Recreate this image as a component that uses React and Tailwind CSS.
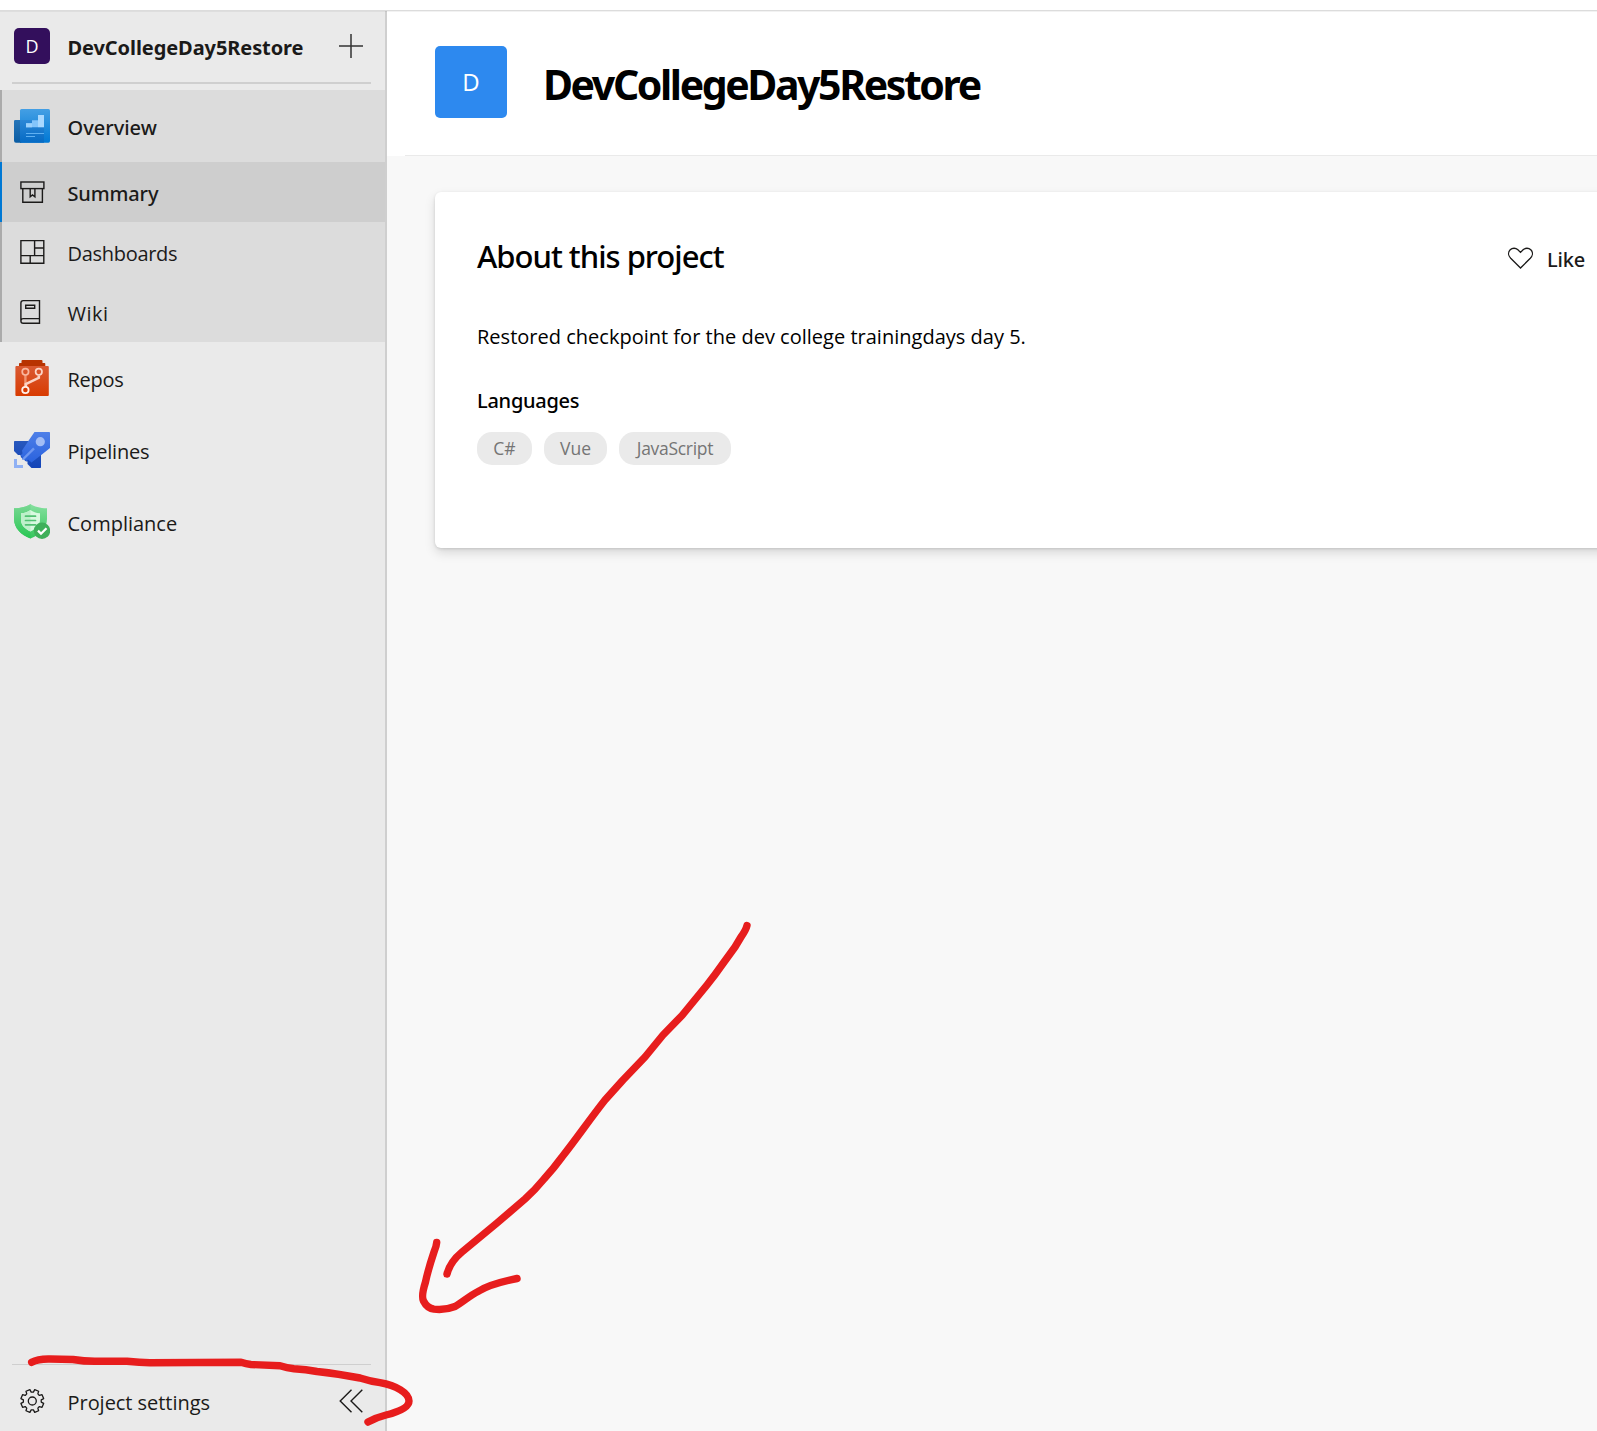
function OverviewIcon() {
  return (
    <svg width="36" height="36" viewBox="0 0 36 36" className="shrink-0">
      <defs>
        <linearGradient id="ovMain" x1="0" y1="0" x2="0" y2="1">
          <stop offset="0" stopColor="#449fe4" />
          <stop offset="1" stopColor="#0078d4" />
        </linearGradient>
        <linearGradient id="ovBack" x1="0" y1="0" x2="0" y2="1">
          <stop offset="0" stopColor="#2675b8" />
          <stop offset="1" stopColor="#0a5ca3" />
        </linearGradient>
        <linearGradient id="ovPage" x1="0" y1="0" x2="0" y2="1">
          <stop offset="0" stopColor="#2c87d6" />
          <stop offset="1" stopColor="#056ac4" />
        </linearGradient>
      </defs>
      <path d="M7.500 1H34.500Q36 1 36 2.500V33Q36 34.700 34.500 34.700H6V2.500Q6 1 7.500 1Z" fill="url(#ovMain)" />
      <path d="M6 12H30V34.700H6Z" fill="url(#ovPage)" />
      <path d="M1.200 12H6V32.500Q6 34.700 8 34.700H2Q0 34.700 0 32.500V13.200Q0 12 1.200 12Z" fill="url(#ovBack)" />
      <path d="M12 15.300H18V12.300H24V19.300H12Z" fill="#83c4fb" />
      <path d="M24 7H30V19.300H24Z" fill="#a9d8ff" />
      <path d="M12 15.300H18V19.300H12Z" fill="#9bd0fc" />
      <path d="M12 25.500H30M12 28.500H21" stroke="#5fb0f2" strokeWidth="1" />
    </svg>
  );
}

function ReposIcon() {
  return (
    <svg width="36" height="36" viewBox="0 0 36 36" className="shrink-0">
      <defs>
        <linearGradient id="repoBody" x1="0" y1="0" x2="0" y2="1">
          <stop offset="0" stopColor="#da5a33" />
          <stop offset="1" stopColor="#d83b01" />
        </linearGradient>
      </defs>
      <path d="M8.500 0H27.500Q28.500 0 28.500 1V3H30.500Q31.300 3 31.300 4V6.500H5V4Q5 3 5.800 3H7.500V1Q7.500 0 8.500 0Z" fill="#b83301" />
      <rect x="1.4" y="6" width="33.4" height="30" rx="1" fill="url(#repoBody)" />
      <path d="M11.400 15V26" stroke="#f0926f" strokeWidth="2.4" />
      <path d="M24.800 15.400V17.800L11.800 24V27" fill="none" stroke="#fbd3c4" strokeWidth="2.6" />
      <circle cx="11.4" cy="11.8" r="3.2" fill="none" stroke="#f9b69e" strokeWidth="1.7" />
      <circle cx="24.8" cy="11.8" r="3.2" fill="none" stroke="#fcd5c7" strokeWidth="1.7" />
      <circle cx="11.4" cy="30" r="3.2" fill="#d83b01" stroke="#fff0ea" strokeWidth="1.8" />
    </svg>
  );
}

function PipelinesIcon() {
  return (
    <svg width="36" height="36" viewBox="0 0 36 36" className="shrink-0">
      <defs>
        <linearGradient id="pipeTop" x1="0" y1="0" x2="0" y2="1">
          <stop offset="0" stopColor="#4f80e8" />
          <stop offset="1" stopColor="#2a62de" />
        </linearGradient>
        <linearGradient id="pipeLow" x1="0" y1="0" x2="0" y2="1">
          <stop offset="0" stopColor="#2858bd" />
          <stop offset="1" stopColor="#1344b8" />
        </linearGradient>
      </defs>
      <path d="M0 9.800Q0 9 .800 9H15L27 21V35.200Q27 36 26.200 36H17.500L13.500 32V29.500L11 29L10 26.500L7 25.500L6.500 23L4 23L0 19Z" fill="url(#pipeLow)" />
      <path d="M20.500 0H35.200Q36 0 36 .800V16L28.500 22L17.500 30.500L14 27.500L12.500 29.500L10.500 27.500L8 27.500L8.500 25L6.500 23.500L8.500 21.500L8 18.500L15 8Z" fill="url(#pipeTop)" />
      <path d="M9.300 27L20 16.300" stroke="#6f97f0" strokeWidth="2.4" />
      <circle cx="26.3" cy="9.7" r="4.6" fill="#a3bdf5" />
      <path d="M0 27H3V33H9V36H0Z" fill="#8fb0f4" />
    </svg>
  );
}

function ComplianceIcon() {
  return (
    <svg width="36" height="36" viewBox="0 0 36 36" className="shrink-0">
      <defs>
        <linearGradient id="shOuter" x1="0" y1="0" x2="0" y2="1">
          <stop offset="0" stopColor="#86e09f" />
          <stop offset="1" stopColor="#35c65c" />
        </linearGradient>
        <linearGradient id="shHalf" x1="0" y1="0" x2="0" y2="1">
          <stop offset="0" stopColor="#7ad894" />
          <stop offset="1" stopColor="#28c653" />
        </linearGradient>
      </defs>
      <path d="M16.500 0C20 2.600 26 4.300 33 4.300V15C33 24 26 31 16.500 34.600C7 31 0 24 0 15V4.300C7 4.300 13 2.600 16.500 0Z" fill="url(#shOuter)" />
      <path d="M16.500 0C13 2.600 7 4.300 0 4.300V15C0 24 7 31 16.500 34.600Z" fill="url(#shHalf)" />
      <path d="M16.500 6C19 7.900 22 9 26 9.200V16C26 21 22 25 16.500 27.500C11 25 7 21 7 16V9.200C11 9 14 7.900 16.500 6Z" fill="#d9f9e1" />
      <path d="M16.500 6C14 7.900 11 9 7 9.200V16C7 21 11 25 16.500 27.500Z" fill="#bdf0ca" />
      <path d="M11.500 12.200H21.500M11.500 16.500H21.500M11.500 20.800H21.500" stroke="#52c173" strokeWidth="1.7" strokeLinecap="round" />
      <circle cx="28" cy="26.8" r="8.2" fill="#3fb05a" />
      <path d="M24 26.600L27 29.700L32.500 24.200" fill="none" stroke="#fff" strokeWidth="2.3" />
    </svg>
  );
}

function SummaryIcon() {
  return (
    <svg width="36" height="36" viewBox="0 0 36 36" fill="none" stroke="#1b1a19" strokeWidth="1.4" className="shrink-0">
      <rect x="6.9" y="8" width="23" height="6.6" />
      <path d="M8.800 14.600V28.200H28.400V14.600M16.200 14.600V22.800L18.500 21L20.900 22.800V14.600" />
    </svg>
  );
}

function DashboardsIcon() {
  return (
    <svg width="36" height="36" viewBox="0 0 36 36" fill="none" stroke="#1b1a19" strokeWidth="1.4" className="shrink-0">
      <path d="M6.900 6.600H29.800V29.300H6.900ZM20.600 6.600V21.600M20.600 14H29.800M6.900 21.600H29.800M16.200 21.600V29.300" />
    </svg>
  );
}

function WikiIcon() {
  return (
    <svg width="36" height="36" viewBox="0 0 36 36" fill="none" stroke="#1b1a19" strokeWidth="1.4" className="shrink-0">
      <path d="M9.200 6.600H25.500V29.300H9.200Q6.900 29.300 6.900 27V9Q6.900 6.600 9.200 6.600ZM7.100 26.400Q7.200 24.600 9.200 24.600H25.500M11.700 11.200H20.700V14.200H11.700Z" />
    </svg>
  );
}

function GearIcon() {
  const pts = [];
  for (let i = 0; i < 8; i++) {
    const mid = -67.5 + i * 45;
    [[-15.5, 9], [-10.5, 11.6], [10.5, 11.6], [15.5, 9]].forEach(([da, r]) => {
      const a = ((mid + da) * Math.PI) / 180;
      pts.push(`${(18.3 + r * Math.cos(a)).toFixed(2)} ${(18 + r * Math.sin(a)).toFixed(2)}`);
    });
  }
  return (
    <svg width="36" height="36" viewBox="0 0 36 36" fill="none" stroke="#1b1a19" strokeWidth="1.3" strokeLinejoin="round" className="shrink-0">
      <path d={`M${pts.join("L")}Z`} />
      <circle cx="18.3" cy="18" r="4" />
    </svg>
  );
}

const SERVICES = [
  { label: "Repos", Icon: ReposIcon, track: "tracking-[-0.25px]" },
  { label: "Pipelines", Icon: PipelinesIcon, track: "tracking-[-0.2px]" },
  { label: "Compliance", Icon: ComplianceIcon, track: "tracking-normal" },
];

const PAGES = [
  { label: "Summary", Icon: SummaryIcon, track: "font-['Noto_Sans'] font-medium tracking-[-0.15px]", active: true },
  { label: "Dashboards", Icon: DashboardsIcon, track: "tracking-[-0.3px]" },
  { label: "Wiki", Icon: WikiIcon, track: "tracking-[0.5px]" },
];

function Sidebar() {
  return (
    <aside className="flex w-[387px] shrink-0 flex-col border-r-2 border-[#cfcfcf] bg-[#eaeaea] text-[20px] text-[#1b1a19]">
      <div className="mx-3 mr-[14px] flex h-[74px] items-center border-b-2 border-[#cfcfcf] pl-[2px]">
        <div className="flex size-9 items-center justify-center rounded-[5px] bg-[#330f5c] text-[18px] text-white">D</div>
        <span className="ml-[17.5px] pt-[4px] font-['Noto_Sans'] font-bold tracking-[-0.08px]">DevCollegeDay5Restore</span>
        <svg width="24" height="24" viewBox="0 0 24 24" className="ml-auto mr-[8.5px]" stroke="#333" strokeWidth="1.5">
          <path d="M0 12H24M12 0V24" />
        </svg>
      </div>
      <div className="mt-[6px] bg-[#dcdcdc]">
        <div className="flex h-[72px] items-center border-l-2 border-[#ababab] pl-3">
          <OverviewIcon />
          <span className="ml-[17.5px] pt-[4px] font-['Noto_Sans'] font-medium">Overview</span>
        </div>
        {PAGES.map(({ label, Icon, track, active }) => (
          <div key={label} className={`flex h-[60px] items-center border-l-2 pl-3 ${active ? "border-[#0078d4] bg-[#cecece]" : "border-[#ababab]"}`}>
            <Icon />
            <span className={`ml-[17.5px] pt-[4px] ${track}`}>{label}</span>
          </div>
        ))}
      </div>
      {SERVICES.map(({ label, Icon, track }) => (
        <div key={label} className="flex h-[72px] items-center pl-[14px]">
          <Icon />
          <span className={`ml-[17.5px] pt-[4px] ${track}`}>{label}</span>
        </div>
      ))}
      <div className="mx-3 mr-[14px] mt-auto flex h-[67px] items-center border-t border-[#cfcfcf] pl-[2px] pt-[6px]">
        <GearIcon />
        <span className="ml-[17.5px] pt-[4px] tracking-[-0.04px]">Project settings</span>
        <svg width="24" height="24" viewBox="0 0 24 24" className="ml-auto mr-[8.5px]" fill="none" stroke="#1b1a19" strokeWidth="1.4">
          <path d="M12.500 .700L1.200 12L12.500 23.300M23.300 .700L12 12L23.300 23.300" />
        </svg>
      </div>
    </aside>
  );
}

function Main() {
  return (
    <main className="flex min-w-0 grow flex-col overflow-hidden bg-[#f8f8f8] text-black">
      <header className="flex h-[146px] shrink-0 bg-white pl-[18px] pt-px">
        <div className="flex grow border-b border-[#eaeaea] pl-[30px] pt-[35px]">
          <div className="flex size-[72px] items-center justify-center rounded-[5px] bg-[#2d89ef] text-[24px] text-white">D</div>
          <h1 className="ml-[36px] pt-[10px] font-['Noto_Sans'] text-[41px] font-bold leading-[56px] tracking-[-2.4px]">DevCollegeDay5Restore</h1>
        </div>
      </header>
      <section className="-mr-8 ml-12 mt-9 h-[356px] rounded-[6px] bg-white pl-[42px] pr-11 pt-[40px] shadow-[0_5px_11px_rgba(0,0,0,0.13),0_1px_3px_rgba(0,0,0,0.12)]">
        <div className="flex items-center justify-between">
          <h2 className="font-['Noto_Sans'] text-[31px] font-medium leading-[48px] tracking-[-1px]">About this project</h2>
          <div className="flex items-center pt-[7px] text-[20px]">
            <svg width="26" height="24" viewBox="0 0 26 24" fill="none" stroke="#1b1a19" strokeWidth="1.3" className="mb-[4px]">
              <path d="M13.500 22L3.700 12.300C1 9.500 1 6 3.200 3.800C5.300 1.700 8.700 1.700 10.900 3.800L13.500 6.400L16.100 3.800C18.300 1.700 21.700 1.700 23.800 3.800C26 6 26 9.500 23.300 12.300Z" />
            </svg>
            <span className="ml-[14px] font-['Noto_Sans'] font-medium tracking-[-0.2px] text-[#1b1a19]">Like</span>
          </div>
        </div>
        <p className="mt-[42px] text-[20px] leading-[30px] tracking-[0.01px]">Restored checkpoint for the dev college trainingdays day 5.</p>
        <h3 className="mt-[34px] font-['Noto_Sans'] text-[20px] font-medium leading-[30px] tracking-[-0.26px]">Languages</h3>
        <div className="mt-4 flex gap-3 text-[17.5px] text-[#757575]">
          <span className="flex h-[33px] w-[55px] items-center justify-center rounded-[15px] bg-[#eaeaea] pb-px">C#</span>
          <span className="flex h-[33px] w-[63px] items-center justify-center rounded-[15px] bg-[#eaeaea] pb-px">Vue</span>
          <span className="flex h-[33px] w-[112px] items-center justify-center rounded-[15px] bg-[#eaeaea] pb-px tracking-[-0.3px]">JavaScript</span>
        </div>
      </section>
    </main>
  );
}

/* Hand-drawn red marker strokes over the page */
function Annotations() {
  return (
    <svg width="1597" height="1431" viewBox="0 0 1597 1431" className="pointer-events-none absolute left-0 top-0" fill="none" stroke="#e71d1d" strokeWidth="7.4" strokeLinecap="round" strokeLinejoin="round">
      <path d="M747 925.500Q746 930 741 937L735 947L723 963.500Q715 975 707 985L682 1015.500L663 1035L645 1057L623 1080L605 1100C590 1119 577 1138 562 1157Q554 1168 544 1179Q535 1190 525 1199L497 1223L462 1252Q450 1262 447 1274" />
      <path d="M436.700 1242.500Q436.500 1246 434 1252Q428 1270 425.500 1282Q421 1296 423.500 1301Q427 1308 434 1309.200Q445 1310.500 455 1306.500C463 1302 469 1296 479 1291Q490 1284 517 1278.500" />
      <path d="M31.700 1362.300Q38 1358.700 50 1359L73 1359.500Q85 1361.500 97 1361.300L127 1361.200Q140 1362.600 150 1362.700L241 1362.300Q246 1364 251 1364.500L280 1365.800Q287 1368 294 1368.700Q306 1369.500 317 1371.500Q340 1374 360 1378Q371 1381.500 380 1382.700C396 1385.500 409 1393 409 1401C409 1408 396 1412.500 386 1415Q376 1417.500 368 1422" />
    </svg>
  );
}

export default function App() {
  return (
    <div className="relative flex h-[1431px] w-full flex-col overflow-hidden bg-white pt-[10px] font-['Open_Sans',sans-serif]">
      <div className="flex min-h-0 grow">
        <Sidebar />
        <Main />
      </div>
      <div className="absolute left-0 top-[10px] h-[2px] w-full border-t border-[#dcdcdc] bg-black/5" />
      <Annotations />
    </div>
  );
}
